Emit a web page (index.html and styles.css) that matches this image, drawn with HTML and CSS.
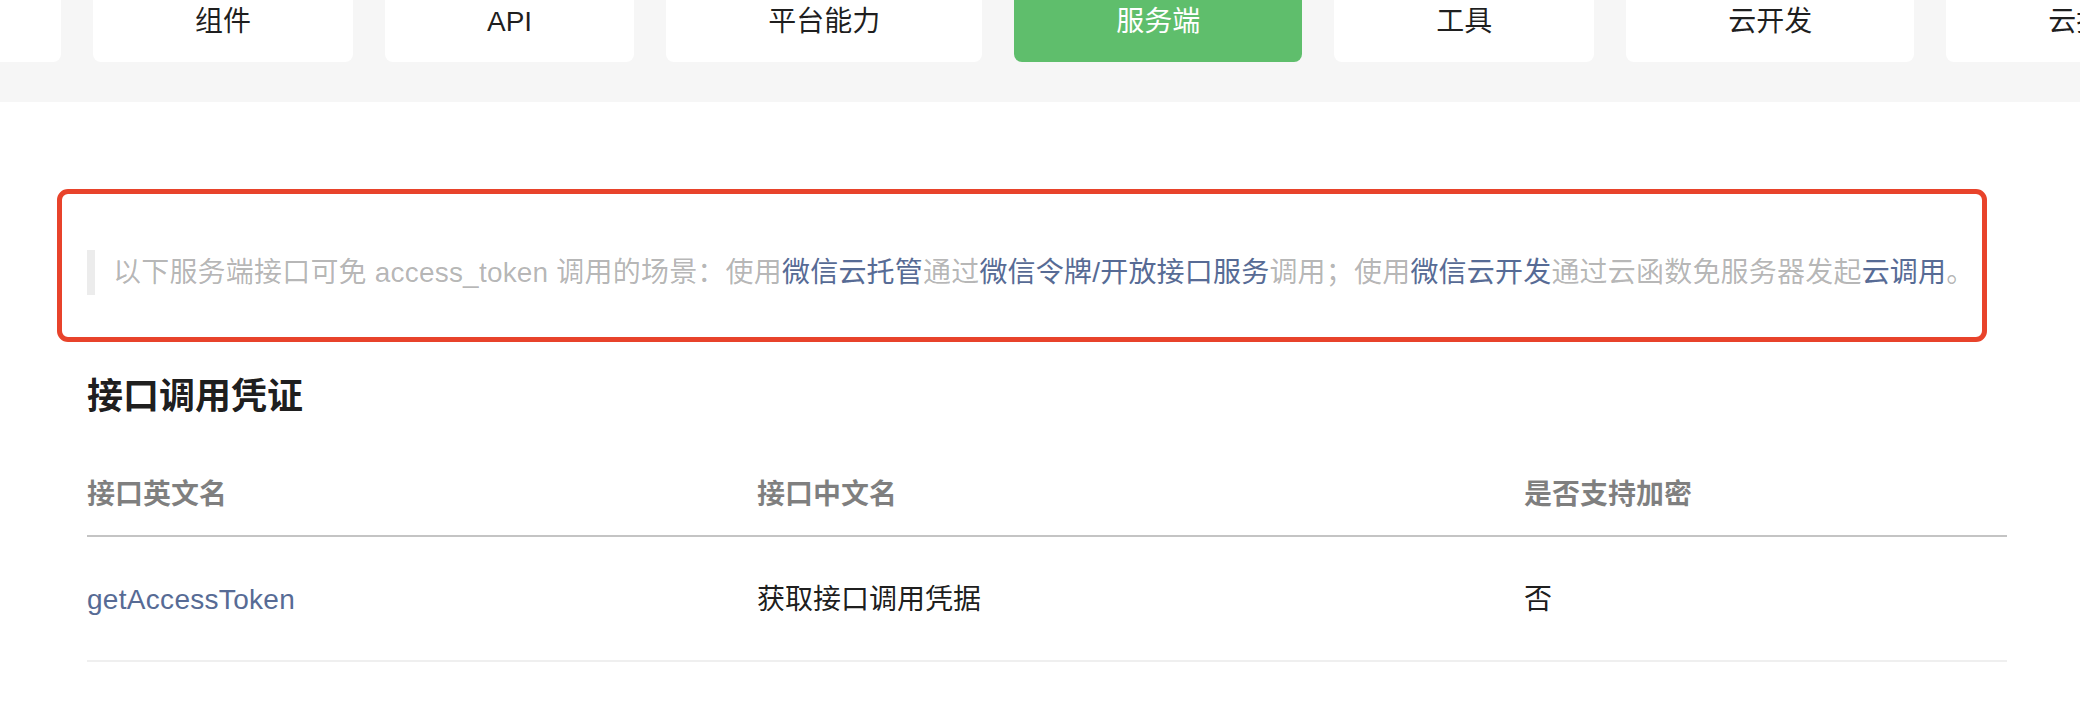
FILE: index.html
```html
<!DOCTYPE html>
<html lang="zh-CN">
<head>
<meta charset="utf-8">
<title>服务端</title>
<link rel="stylesheet" href="styles.css">
</head>
<body>
<nav class="nav">
  <div class="nav-track">
    <a class="tab tab-hidden" aria-label="框架"></a>
    <a class="tab">组件</a>
    <a class="tab">API</a>
    <a class="tab">平台能力</a>
    <a class="tab tab-active">服务端</a>
    <a class="tab">工具</a>
    <a class="tab">云开发</a>
    <a class="tab">云托管</a>
  </div>
</nav>
<main class="content">
  <div class="notice">
    <blockquote class="quote">以下服务端接口可免 access_token 调用的场景：使用<a class="link">微信云托管</a>通过<a class="link">微信令牌/开放接口服务</a>调用；使用<a class="link">微信云开发</a>通过云函数免服务器发起<a class="link">云调用</a>。</blockquote>
  </div>
  <h2 class="section-title">接口调用凭证</h2>
  <table class="api-table">
    <colgroup>
      <col class="col-en">
      <col class="col-cn">
      <col class="col-enc">
    </colgroup>
    <thead>
      <tr>
        <th>接口英文名</th>
        <th>接口中文名</th>
        <th>是否支持加密</th>
      </tr>
    </thead>
    <tbody>
      <tr>
        <td><a class="link link-code">getAccessToken</a></td>
        <td>获取接口调用凭据</td>
        <td>否</td>
      </tr>
    </tbody>
  </table>
</main>
</body>
</html>
```
FILE: styles.css
```css
html, body {
  margin: 0;
  padding: 0;
  background: #ffffff;
}

body {
  font-family: "Liberation Sans", "Noto Sans CJK SC", sans-serif;
  font-size: 28px;
  color: rgba(0, 0, 0, 0.9);
  width: 2080px;
  overflow: hidden;
}

.nav {
  background: #f6f6f6;
  height: 102px;
  overflow: hidden;
}

.nav-track {
  display: flex;
  gap: 32px;
  margin-left: -199px;
  white-space: nowrap;
}

.tab {
  flex: none;
  display: block;
  height: 62px;
  line-height: 44px;
  padding: 0 102px;
  background: #ffffff;
  border-radius: 0 0 8px 8px;
  color: rgba(0, 0, 0, 0.88);
  font-size: 28px;
}

.tab-hidden {
  width: 56px;
}

.tab-active {
  background: #5fbe6c;
  color: #ffffff;
}

.content {
  width: 1920px;
  padding-left: 87px;
}

.notice {
  margin: 87px 0 0 -30px;
  width: 1930px;
  box-sizing: border-box;
  border: 5px solid #e8432b;
  border-radius: 11px;
  padding: 56px 0 42px 25px;
}

.quote {
  margin: 0;
  border-left: 8px solid #ececec;
  padding-left: 18px;
  line-height: 45px;
  font-size: 28px;
  letter-spacing: 0.2px;
  color: rgba(0, 0, 0, 0.3);
  white-space: nowrap;
}

.link {
  color: #576b95;
  text-decoration: none;
}

.link-code {
  letter-spacing: 0.3px;
}

.section-title {
  margin: 30px 0 20px;
  font-size: 36px;
  line-height: 50px;
  font-weight: 700;
  color: rgba(0, 0, 0, 0.9);
}

.api-table {
  width: 1920px;
  border-collapse: collapse;
  table-layout: fixed;
}

.col-en { width: 670px; }
.col-cn { width: 767px; }
.col-enc { width: 483px; }

.api-table th {
  text-align: left;
  font-weight: 700;
  font-size: 28px;
  line-height: 44px;
  color: rgba(0, 0, 0, 0.5);
  padding: 31px 0 18px;
  border-bottom: 2px solid #c4c4c4;
}

.api-table td {
  font-size: 28px;
  line-height: 44px;
  padding: 41px 0 38px;
  border-bottom: 2px solid #efefef;
  color: rgba(0, 0, 0, 0.9);
}
```
